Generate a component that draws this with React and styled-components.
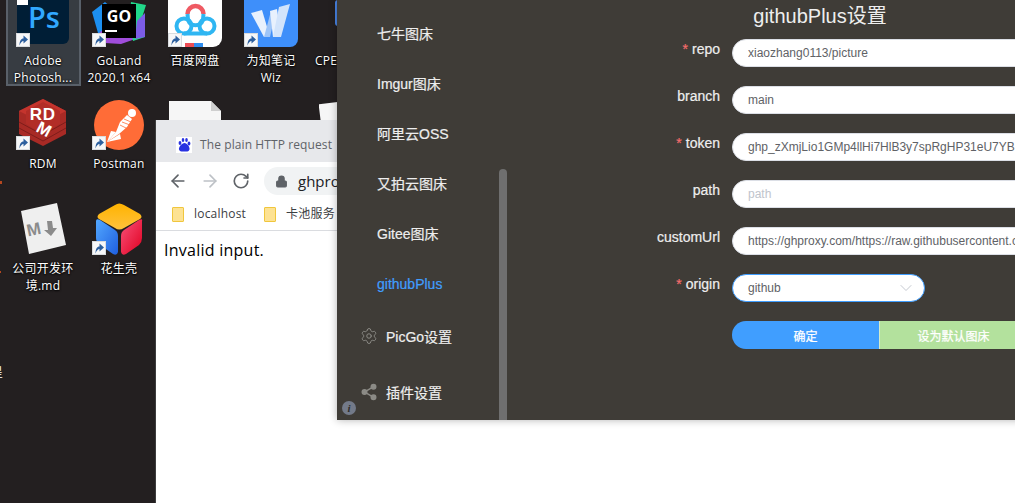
import React from "react";
import styled, { createGlobalStyle } from "styled-components";
import { ArrowLeft, ArrowRight, RotateCw, Lock, ChevronDown, Share2, Settings } from "lucide-react";

const Global = createGlobalStyle`
  html, body { margin: 0; padding: 0; background: #231f20; overflow: hidden; }
  * { box-sizing: border-box; }
`;

const SANS = `"Liberation Sans", "Noto Sans CJK SC", sans-serif`;
const UI = `"Open Sans", "Noto Sans CJK SC", sans-serif`;

const Desktop = styled.div`
  position: relative;
  width: 1015px;
  height: 503px;
  overflow: hidden;
  background: #231f20;
`;

const EdgeMark = styled.span`
  position: absolute;
  left: ${(p) => p.$left}px;
  top: ${(p) => p.$top}px;
  width: ${(p) => p.$w}px;
  height: ${(p) => p.$h}px;
  background: ${(p) => p.$color};
`;

const EdgeGlyph = styled.span`
  position: absolute;
  left: -9px;
  top: 364px;
  font: 12px/17px ${UI};
  color: #fff;
`;

const DesktopItem = styled.div`
  position: absolute;
  left: ${(p) => p.$center - 38}px;
  top: ${(p) => p.$top}px;
  width: 76px;
  display: flex;
  flex-direction: column;
  align-items: center;
`;

const Selection = styled.div`
  position: absolute;
  left: 6px;
  top: -2px;
  width: 75px;
  height: 88px;
  background: #373c42;
  border: 2px solid #596069;
`;

const IconBox = styled.div`
  position: relative;
  width: 56px;
  height: 56px;
  margin-bottom: 5px;
  & > svg { display: block; }
`;

const Badge = styled.svg`
  position: absolute;
  left: 1px;
  bottom: 0;
  width: 14px;
  height: 14px;
`;

const Label = styled.div`
  position: relative;
  width: 76px;
  padding-left: ${(p) => (p.$left ? 6 : 0)}px;
  font: 12px/17px ${UI};
  letter-spacing: 0.25px;
  color: #fff;
  text-align: ${(p) => (p.$left ? "left" : "center")};
  text-shadow: 0 1px 2px #000, 0 0 2px #000;
  white-space: pre-line;
`;

const Shortcut = () => (
  <Badge viewBox="0 0 14 14">
    <rect width="14" height="14" fill="#d9dcdf" />
    <rect x="1" y="1" width="12" height="12" fill="#f6f7f8" />
    <path d="M3.5 12.5 C3.5 8 5 5.5 7.5 5.5 V2.5 L12 6.5 L7.5 10.5 V8 C6 8 4.5 9.5 3.5 12.5 Z" fill="#2c5f9e" />
  </Badge>
);

const PsIcon = () => (
  <svg width="56" height="56" viewBox="0 0 56 56">
    <rect x="2" y="0" width="52" height="53" rx="6" fill="#001e36" />
    <text x="29" y="37" textAnchor="middle" fontFamily="Open Sans" fontWeight="600" fontSize="29" fill="#31a8ff">Ps</text>
    <rect x="2" y="8" width="11" height="6" fill="#fff" />
  </svg>
);

const GoLandIcon = () => (
  <svg width="56" height="56" viewBox="0 0 56 56">
    <path d="M1 21 L14 11 L22 18 L12 44 L7 42 Z" fill="#1c8ff0" />
    <path d="M8 42 L22 30 L44 30 L50 46 L30 53 L14 52 Z" fill="#a04ddb" />
    <path d="M40 11 L55 14 L50 30 L54 46 L42 50 L38 30 Z" fill="#21d789" />
    <path d="M46 30 L54 22 L54 46 L44 48 Z" fill="#7b5ce6" />
    <rect x="11" y="13" width="34" height="34" fill="#000" />
    <text x="28" y="31" textAnchor="middle" fontFamily="Open Sans" fontWeight="700" fontSize="16" fill="#fff">GO</text>
    <rect x="14" y="39" width="12" height="2" fill="#fff" />
  </svg>
);

const BaiduIcon = () => (
  <svg width="56" height="56" viewBox="0 0 56 56">
    <rect x="1" y="1" width="54" height="55" rx="9" fill="#fff" />
    <circle cx="17" cy="35" r="7.5" fill="none" stroke="#2fb6f2" strokeWidth="4" />
    <circle cx="40" cy="35" r="7.5" fill="none" stroke="#2fb6f2" strokeWidth="4" />
    <path d="M17 42.5 H40" stroke="#2fb6f2" strokeWidth="4" />
    <path d="M21 29 A8 8 0 0 0 36 29" fill="none" stroke="#2fb6f2" strokeWidth="4" />
    <path d="M20.5 23 A8 8 0 0 1 36.5 23" fill="none" stroke="#ef5a63" strokeWidth="4.5" />
    <path d="M20.5 23 L21 29 M36.5 23 L36 29" stroke="#2fb6f2" strokeWidth="4" />
    <rect x="18" y="52" width="9" height="4" fill="#ee4e55" />
    <rect x="27" y="52" width="9" height="4" fill="#2f8ef0" />
  </svg>
);

const WizIcon = () => (
  <svg width="56" height="56" viewBox="0 0 56 56">
    <rect x="1" y="0" width="54" height="56" rx="8" fill="#3e8ffa" />
    <path d="M8 22 L19 19 L27 46 L21 46 Z" fill="#e8f1fd" />
    <path d="M21 46 L28 20 L33 20 L27 46 Z" fill="#9cc4f8" />
    <path d="M27 20 L34 18 L38 46 L30 46 Z" fill="#e8f1fd" />
    <path d="M30 46 L36 16 L47 13 L38 46 Z" fill="#d2e4fb" />
  </svg>
);

const CpeIcon = () => (
  <svg width="56" height="56" viewBox="0 0 56 56">
    <rect x="20" y="30" width="24" height="23" rx="2" fill="#e9e9e9" />
    <path d="M20 34 H30 M20 39 H30 M20 44 H30" stroke="#bdbdbd" strokeWidth="1" />
    <rect x="16" y="9" width="28" height="26" rx="3" fill="#4a86e8" />
    <rect x="21" y="4" width="23" height="8" fill="#e9e9e9" />
    <path d="M20 21 L23 27 L28 17" fill="none" stroke="#fff" strokeWidth="1.5" />
  </svg>
);

const DocIcon = ({ tilt }) => (
  <svg width="56" height="56" viewBox="0 0 56 56">
    <g transform={tilt ? "rotate(-7 28 28)" : undefined}>
      <path d="M2 7 H44 L54 17 V56 H2 Z" fill="#f6f6f6" />
      <path d="M44 7 L54 17 H44 Z" fill="#cfcfcf" />
    </g>
  </svg>
);

const RdmIcon = () => (
  <svg width="56" height="56" viewBox="0 0 56 56">
    <path d="M28 5 L51 17 V40 L28 52 L4 40 V17 Z" fill="#a82a25" />
    <path d="M28 5 L51 17 L28 29 L4 17 Z" fill="#c4342d" />
    <path d="M4 28 L28 41 L51 28 M4 34 L28 47 L51 34" fill="none" stroke="#7e1d1a" strokeWidth="1" />
    <path d="M11 17 L28 8 L45 17 V30 L28 40 L11 30 Z" fill="#b22d27" />
    <text x="21" y="26" textAnchor="middle" fontFamily="Liberation Sans" fontWeight="700" fontSize="17" fill="#fff">R</text>
    <text x="34" y="26" textAnchor="middle" fontFamily="Liberation Sans" fontWeight="700" fontSize="17" fill="#fff">D</text>
    <text x="29" y="41" textAnchor="middle" fontFamily="Liberation Sans" fontWeight="700" fontSize="17" fill="#fff" transform="rotate(28 29 35)">M</text>
  </svg>
);

const PostmanIcon = () => (
  <svg width="56" height="56" viewBox="0 0 56 56">
    <circle cx="28" cy="31" r="25" fill="#ff6c37" />
    <path d="M16 48 L25 38 L29 28 L36 21 L41 25 L36 33 L28 40 Z" fill="#fff" />
    <path d="M25 38 L20 37 L16 48 Z M29 40 L30 45 L16 48 Z" fill="#fff" />
    <circle cx="41" cy="19" r="4" fill="#fff" />
    <path d="M29 31 L37 35 M31 28 L39 31 M33 25 L40 28" stroke="#ff6c37" strokeWidth="0.8" />
  </svg>
);

const MdIcon = () => (
  <svg width="56" height="56" viewBox="0 0 56 56">
    <path d="M6 12 L42 4 L51 46 L14 55 Z" fill="#efefef" />
    <text x="19" y="36" textAnchor="middle" fontFamily="Liberation Sans" fontWeight="700" fontSize="17" fill="#8b8b8b" transform="rotate(-12 19 32)">M</text>
    <path d="M32 22 H37 L38 29 H42 L36 37 L29 31 H33 Z" fill="#8b8b8b" />
  </svg>
);

const CubeIcon = () => (
  <svg width="56" height="56" viewBox="0 0 56 56">
    <defs>
      <linearGradient id="cubeTop" x1="0" y1="0" x2="0" y2="1">
        <stop offset="0" stopColor="#ffb300" />
        <stop offset="1" stopColor="#ffc23d" />
      </linearGradient>
      <linearGradient id="cubeL" x1="0" y1="0" x2="1" y2="1">
        <stop offset="0" stopColor="#52a8ff" />
        <stop offset="1" stopColor="#1f5fe0" />
      </linearGradient>
      <linearGradient id="cubeR" x1="0" y1="0" x2="1" y2="1">
        <stop offset="0" stopColor="#f9527a" />
        <stop offset="1" stopColor="#e00020" />
      </linearGradient>
    </defs>
    <path d="M24 6 Q28 3 33 6 L49 15 Q52 18 49 20 L33 29 Q28 32 24 29 L8 20 Q5 18 8 15 Z" fill="url(#cubeTop)" />
    <path d="M5 22 Q5 19 9 21 L24 31 Q27 33 27 37 V53 Q26 57 22 55 L9 46 Q5 43 5 39 Z" fill="url(#cubeL)" />
    <path d="M51 22 Q52 19 48 21 L33 31 Q30 33 30 37 V53 Q31 57 35 55 L48 46 Q51 43 51 39 Z" fill="url(#cubeR)" />
  </svg>
);

const Browser = styled.div`
  position: absolute;
  left: 156px;
  top: 120px;
  width: 900px;
  height: 420px;
  display: flex;
  flex-direction: column;
  background: #fff;
  box-shadow: -1px 0 0 #3d3d3d;
`;

const TabStrip = styled.div`
  height: 42px;
  flex: none;
  display: flex;
  align-items: center;
  gap: 8px;
  padding: 7px 0 0 20px;
  background: #e7e8eb;
`;

const Favicon = styled.svg`
  width: 16px;
  height: 16px;
  flex: none;
`;

const TabTitle = styled.span`
  font: 12px/18px ${UI};
  letter-spacing: 0.1px;
  color: #5f6368;
  white-space: nowrap;
`;

const Toolbar = styled.div`
  height: 38px;
  flex: none;
  display: flex;
  align-items: center;
  padding-left: 12px;
  background: #fff;
`;

const NavButton = styled.span`
  display: flex;
  width: 20px;
  margin-right: ${(p) => p.$gap}px;
  color: ${(p) => p.$color};
`;

const Omnibox = styled.div`
  width: 300px;
  height: 28px;
  display: flex;
  align-items: center;
  gap: 10px;
  padding-left: 11px;
  border-radius: 14px;
  background: #f1f3f4;
  font: 15px/20px ${UI};
  color: #202124;
  & svg { color: #5f6368; fill: #5f6368; }
`;

const Bookmarks = styled.div`
  height: 31px;
  flex: none;
  display: flex;
  align-items: center;
  padding: 0 0 2px 16px;
  border-bottom: 1px solid #dadce0;
`;

const Bookmark = styled.span`
  display: flex;
  align-items: center;
  gap: ${(p) => p.$gap}px;
  margin-right: ${(p) => p.$right}px;
  font: 12px/16px ${UI};
  letter-spacing: 0.2px;
  color: #3c4043;
`;

const FolderIcon = styled.span`
  display: block;
  width: 12px;
  height: 15px;
  background: #fde293;
  border: 1px solid #f0c63d;
  border-radius: 1px;
`;

const PageText = styled.div`
  padding: 9px 8px;
  font: 16px/20px ${UI};
  letter-spacing: 0.25px;
  color: #000;
`;

const PicGo = styled.div`
  position: absolute;
  left: 337px;
  top: 0;
  width: 796px;
  height: 420px;
  display: flex;
  background: #3f3c37;
  box-shadow: 0 0 8px rgba(0, 0, 0, 0.3);
  font-family: ${SANS};
  overflow: hidden;
`;

const Sidebar = styled.nav`
  position: relative;
  width: 170px;
  flex: none;
  padding-top: 9px;
`;

const SubItem = styled.div`
  height: 50px;
  padding-left: 40px;
  font-size: 14px;
  line-height: 50px;
  color: ${(p) => (p.$active ? "#409eff" : "#eeeeee")};
  -webkit-text-stroke: 0.2px currentColor;
`;

const GroupItem = styled.div`
  height: 56px;
  display: flex;
  align-items: center;
  gap: 8px;
  padding: 0 0 2px 23px;
  font-size: 14px;
  color: #eeeeee;
  -webkit-text-stroke: 0.2px currentColor;
  & svg { color: #8c8b86; flex: none; }
`;

const Thumb = styled.div`
  position: absolute;
  right: 0;
  top: 169px;
  width: 8px;
  height: 255px;
  border-radius: 4px;
  background: #6f6f6f;
`;

const InfoBadge = styled.span`
  position: absolute;
  left: 5px;
  top: 401px;
  width: 14px;
  height: 14px;
  border-radius: 50%;
  background: #737a89;
  color: #2f2d2a;
  font: italic bold 11px/14px "Liberation Serif", serif;
  text-align: center;
`;

const Main = styled.main`
  flex: 1;
  min-width: 0;
`;

const Title = styled.h1`
  margin: 0;
  height: 32px;
  font-size: 20px;
  font-weight: 400;
  line-height: 32px;
  color: #eeeeee;
  text-align: center;
`;

const Form = styled.form`
  display: flex;
  flex-direction: column;
  gap: 19px;
  padding-top: 7px;
`;

const Row = styled.div`
  display: grid;
  grid-template-columns: 213px 340px;
  column-gap: 12px;
  height: 28px;
`;

const FieldLabel = styled.label`
  font-size: 14px;
  line-height: 20px;
  color: #eeeeee;
  text-align: right;
  -webkit-text-stroke: 0.2px currentColor;
  &::before {
    content: ${(p) => (p.$required ? '"*"' : "none")};
    margin-right: 4px;
    color: #f56c6c;
  }
`;

const Input = styled.input`
  width: 340px;
  height: 28px;
  padding: 0 15px;
  border: 1px solid #dcdfe6;
  border-radius: 14px;
  outline: none;
  background: #fff;
  font: 12px ${SANS};
  color: #606266;
  &::placeholder { color: #c0c4cc; }
`;

const Select = styled.div`
  position: relative;
  width: 193px;
  height: 28px;
  padding: 0 15px;
  border: 1px solid #409eff;
  border-radius: 14px;
  background: #fff;
  font-size: 12px;
  line-height: 26px;
  color: #606266;
  & svg {
    position: absolute;
    right: 8px;
    top: 3px;
    color: #c0c4cc;
  }
`;

const Buttons = styled.div`
  display: flex;
  width: 295px;
`;

const Action = styled.button`
  width: ${(p) => p.$w}px;
  height: 28px;
  padding: 0;
  border: 0;
  border-left: ${(p) => (p.$split ? "1px solid #d5ebc9" : "0")};
  border-radius: ${(p) => (p.$split ? "0" : "14px 0 0 14px")};
  background: ${(p) => p.$bg};
  font: 12px ${SANS};
  color: #fff;
  -webkit-text-stroke: 0.25px currentColor;
`;

const fields = [
  { label: "repo", required: true, value: "xiaozhang0113/picture" },
  { label: "branch", value: "main" },
  { label: "token", required: true, value: "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" },
  { label: "path", placeholder: "path" },
  { label: "customUrl", value: "https://ghproxy.com/https://raw.githubusercontent.com" },
];

const items = [
  { c: 43, t: -9, icon: <PsIcon />, label: "Adobe\nPhotosh...", badge: true },
  { c: 119, t: -9, icon: <GoLandIcon />, label: "GoLand\n2020.1 x64", badge: true },
  { c: 195, t: -9, icon: <BaiduIcon />, label: "百度网盘", badge: true },
  { c: 271, t: -9, icon: <WizIcon />, label: "为知笔记\nWiz", badge: true },
  { c: 347, t: -9, icon: <CpeIcon />, label: "CPE", left: true },
  { c: 43, t: 94, icon: <RdmIcon />, label: "RDM", badge: true },
  { c: 119, t: 94, icon: <PostmanIcon />, label: "Postman", badge: true },
  { c: 195, t: 94, icon: <DocIcon /> },
  { c: 347, t: 94, icon: <DocIcon tilt /> },
  { c: 43, t: 199, icon: <MdIcon />, label: "公司开发环\n境.md" },
  { c: 119, t: 199, icon: <CubeIcon />, label: "花生壳", badge: true },
];

export default function App() {
  return (
    <Desktop>
      <Global />
      <Selection />
      {items.map((it) => (
        <DesktopItem key={it.c + "-" + it.t} $center={it.c} $top={it.t}>
          <IconBox>
            {it.icon}
            {it.badge && <Shortcut />}
          </IconBox>
          {it.label && <Label $left={it.left}>{it.label}</Label>}
        </DesktopItem>
      ))}
      <EdgeMark $left={0} $top={181} $w={2} $h={3} $color="#b5471f" />
      <EdgeMark $left={0} $top={271} $w={1} $h={2} $color="#b5471f" />
      <EdgeGlyph>呈</EdgeGlyph>

      <Browser>
        <TabStrip>
          <Favicon viewBox="0 0 16 16">
            <rect width="16" height="16" fill="#fff" />
            <ellipse cx="4" cy="6" rx="1.4" ry="2" fill="#2932e1" />
            <ellipse cx="7" cy="3" rx="1.3" ry="2" fill="#2932e1" />
            <ellipse cx="10.5" cy="3" rx="1.3" ry="2" fill="#2932e1" />
            <ellipse cx="13" cy="6.5" rx="1.4" ry="2" fill="#2932e1" />
            <path d="M8.5 6 C11 6 14 10 13.5 12.5 C13 15 10 14.5 8.5 14.5 C7 14.5 3.5 15 3 12.5 C2.5 10 6 6 8.5 6 Z" fill="#2932e1" />
          </Favicon>
          <TabTitle>The plain HTTP request</TabTitle>
        </TabStrip>
        <Toolbar>
          <NavButton $gap={12} $color="#5f6368"><ArrowLeft size={20} strokeWidth={2} /></NavButton>
          <NavButton $gap={12} $color="#bdc1c6"><ArrowRight size={20} strokeWidth={2} /></NavButton>
          <NavButton $gap={12} $color="#5f6368"><RotateCw size={18} strokeWidth={2.2} /></NavButton>
          <Omnibox>
            <Lock size={13} strokeWidth={2} />
            <span>ghpro</span>
          </Omnibox>
        </Toolbar>
        <Bookmarks>
          <Bookmark $gap={10} $right={18}><FolderIcon />localhost</Bookmark>
          <Bookmark $gap={10} $right={18}><FolderIcon />卡池服务</Bookmark>
        </Bookmarks>
        <PageText>Invalid input.</PageText>
      </Browser>

      <PicGo>
        <Sidebar>
          <SubItem>七牛图床</SubItem>
          <SubItem>Imgur图床</SubItem>
          <SubItem>阿里云OSS</SubItem>
          <SubItem>又拍云图床</SubItem>
          <SubItem>Gitee图床</SubItem>
          <SubItem $active>githubPlus</SubItem>
          <GroupItem><Settings size={18} strokeWidth={1.3} />PicGo设置</GroupItem>
          <GroupItem><Share2 size={18} strokeWidth={2} fill="currentColor" />插件设置</GroupItem>
          <Thumb />
          <InfoBadge>i</InfoBadge>
        </Sidebar>
        <Main>
          <Title>githubPlus设置</Title>
          <Form>
            {fields.map((f) => (
              <Row key={f.label}>
                <FieldLabel $required={f.required}>{f.label}</FieldLabel>
                <Input readOnly value={f.value || ""} placeholder={f.placeholder} />
              </Row>
            ))}
            <Row>
              <FieldLabel $required>origin</FieldLabel>
              <Select>github<ChevronDown size={20} strokeWidth={1.1} /></Select>
            </Row>
            <Row>
              <span />
              <Buttons>
                <Action type="button" $w={147} $bg="#409eff">确定</Action>
                <Action type="button" $w={148} $split $bg="#b3e19d">设为默认图床</Action>
              </Buttons>
            </Row>
          </Form>
        </Main>
      </PicGo>
    </Desktop>
  );
}
